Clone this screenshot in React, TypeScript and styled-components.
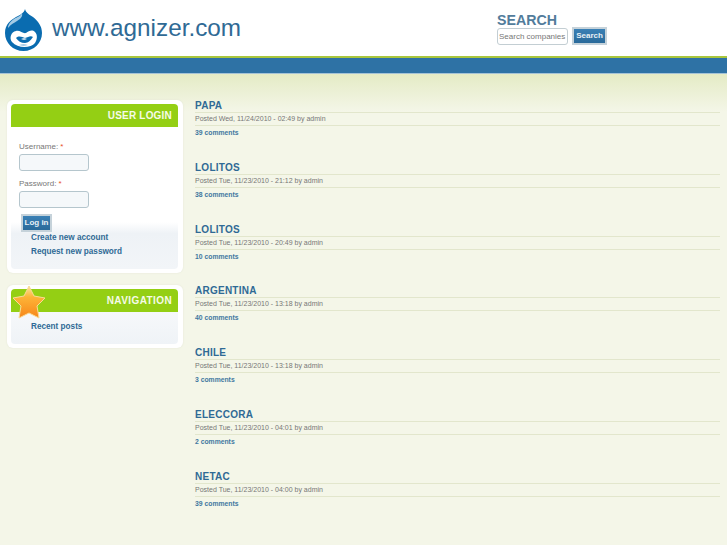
import styled, { createGlobalStyle } from "styled-components";

const posts = [
  { title: "PAPA", date: "Wed, 11/24/2010 - 02:49", comments: 39 },
  { title: "LOLITOS", date: "Tue, 11/23/2010 - 21:12", comments: 38 },
  { title: "LOLITOS", date: "Tue, 11/23/2010 - 20:49", comments: 10 },
  { title: "ARGENTINA", date: "Tue, 11/23/2010 - 13:18", comments: 40 },
  { title: "CHILE", date: "Tue, 11/23/2010 - 13:18", comments: 3 },
  { title: "ELECCORA", date: "Tue, 11/23/2010 - 04:01", comments: 2 },
  { title: "NETAC", date: "Tue, 11/23/2010 - 04:00", comments: 39 },
];

const GlobalStyle = createGlobalStyle`
  html, body {
    margin: 0;
    height: 545px;
    overflow: hidden;
    background: #f4f6e8;
    font-family: "Liberation Sans", Arial, sans-serif;
  }
`;

const Header = styled.header`
  height: 56px;
  background: #fff;
  display: flex;
  box-sizing: border-box;
  padding-left: 5px;
`;

const Logo = styled.svg`
  width: 37px;
  height: 42px;
  margin-top: 9px;
  flex: none;
`;

const SiteName = styled.h1`
  margin: 13px 0 0 10px;
  width: 445px;
  flex: none;
  font-size: 24.3px;
  font-weight: 400;
  line-height: 30px;
  color: #2f6a95;
`;

const SearchBlock = styled.div`
  padding-top: 13px;
`;

const SearchTitle = styled.div`
  font-size: 14.2px;
  font-weight: 700;
  line-height: 14px;
  color: #527c9b;
`;

const SearchRow = styled.div`
  display: flex;
  align-items: center;
  gap: 4px;
`;

const SearchInput = styled.div`
  width: 71px;
  height: 17px;
  box-sizing: border-box;
  border: 1px solid #c3ced3;
  border-radius: 3px;
  padding-left: 1px;
  font-size: 8px;
  line-height: 15px;
  color: #777;
  white-space: nowrap;
`;

const Button = styled.div`
  height: 18px;
  box-sizing: border-box;
  border: 2px solid #c5d2da;
  background: linear-gradient(#3a80b5, #2a6a9a);
  color: #e8f0f5;
  font-size: 8px;
  font-weight: 700;
  line-height: 14px;
  text-align: center;
`;

const SearchButton = styled(Button)`
  width: 35px;
`;

const LoginButton = styled(Button)`
  width: 31px;
  margin: -1px 0 0 2px;
`;

const Bar = styled.div`
  height: 15px;
  background: #2e72a5;
  border-top: 2px solid #a9c63c;
  border-bottom: 1px solid #a5c3d6;
`;

const Main = styled.main`
  display: flex;
  gap: 12px;
  padding: 26px 7px 0 7px;
  background: linear-gradient(#e4ebc5 0, #f4f6e8 38px) no-repeat;
`;

const Sidebar = styled.aside`
  width: 176px;
  flex: none;
  display: flex;
  flex-direction: column;
  gap: 12px;
`;

const Block = styled.section`
  position: relative;
  background: #fff;
  border-radius: 6px;
  padding: 4px 5px 4px 4px;
  box-shadow: 0 0 2px #e2e5d5;
`;

const BlockTitle = styled.h2<{ $spacing: number }>`
  margin: 0;
  height: 23px;
  background: #94cf14;
  border-radius: 4px 4px 0 0;
  color: #f6fbe8;
  font-size: 10px;
  font-weight: 700;
  line-height: 23px;
  letter-spacing: ${(p) => p.$spacing}px;
  text-align: right;
  padding-right: 6px;
`;

const BlockBody = styled.div<{ $height: number }>`
  display: flow-root;
  height: ${(p) => p.$height}px;
  box-sizing: border-box;
  border-radius: 0 0 4px 4px;
  background: linear-gradient(#f6f8fa 0, #eff3f7 100%);
`;

const LoginBody = styled(BlockBody)`
  padding: 14px 0 0 8px;
  background: linear-gradient(#fff 0, #fff 67%, #eef2f6 75%, #f2f5f8 100%);
`;

const FieldLabel = styled.div`
  font-size: 8px;
  line-height: 12px;
  color: #777;

  span {
    color: #e8502a;
  }
`;

const LoginField = styled.div`
  width: 70px;
  height: 17px;
  box-sizing: border-box;
  margin: 1px 0 7px;
  border: 1px solid #b5c6cd;
  border-radius: 3px;
  background: #f5f8fa;
`;

const BlockLinks = styled.ul<{ $top: number; $indent: number }>`
  list-style: none;
  margin: ${(p) => p.$top}px 0 0;
  padding: 0 0 0 ${(p) => p.$indent}px;
`;

const BlockLink = styled.li`
  font-size: 8.2px;
  font-weight: 700;
  line-height: 14px;
  color: #2f6a95;
`;

const Star = styled.svg`
  position: absolute;
  left: 5px;
  top: 0;
  width: 34px;
  height: 34px;
`;

const Posts = styled.div`
  flex: 1;
`;

const Post = styled.article`
  height: 61.8px;
`;

const PostTitle = styled.h3`
  margin: 0;
  height: 12px;
  font-size: 10px;
  font-weight: 700;
  line-height: 11px;
  letter-spacing: 0.25px;
  color: #2f6a95;
  border-bottom: 1px solid #e2e6cc;
`;

const PostMeta = styled.div`
  height: 12px;
  font-size: 7px;
  line-height: 12px;
  color: #777;
  border-bottom: 1px solid #e2e6cc;
`;

const PostLinks = styled.div`
  font-size: 6.8px;
  font-weight: 700;
  line-height: 13px;
  color: #3f78a0;
`;

export default function App() {
  return (
    <>
      <GlobalStyle />
      <Header>
        <Logo viewBox="0 0 37 42">
          <path
            d="M20 0c1 4 5 6 8 8 5 4 9 9 9 16 0 10-8 18-18.500 18S0 34 0 24C0 15 6 11 11 8c4-2 8-4 9-8z"
            fill="#0a6cb0"
          />
          <path d="M17 4c-1 3-5 4-8 6-3 2-6 5-6 9 3-4 6-5 9-7 3-2 6-4 5-8z" fill="#a4cbe5" />
          <path
            d="M7 33c-3-4-1-10 4-11 4-1 7 3 10 2 3-2 6-4 9-1 3 3 2 8 0 11-4 5-17 6-23-1z"
            fill="#fff"
          />
          <path d="M11 29c3-3 6-1 9 0 3-1 6-3 8-1-2 3-5 6-8 6-4 0-7-2-9-5z" fill="#0a6cb0" />
          <path d="M16 30c2-1 4-1 6 0-2 1-4 1-6 0z" fill="#fff" />
          <path d="M14 36c3-1 6-1 9 0-3 1-6 1-9 0z" fill="#8bbbdc" />
        </Logo>
        <SiteName>www.agnizer.com</SiteName>
        <SearchBlock>
          <SearchTitle>SEARCH</SearchTitle>
          <SearchRow>
            <SearchInput>Search companies</SearchInput>
            <SearchButton>Search</SearchButton>
          </SearchRow>
        </SearchBlock>
      </Header>
      <Bar />
      <Main>
        <Sidebar>
          <Block>
            <BlockTitle $spacing={0.2}>USER LOGIN</BlockTitle>
            <LoginBody $height={142}>
              <FieldLabel>
                Username: <span>*</span>
              </FieldLabel>
              <LoginField />
              <FieldLabel>
                Password: <span>*</span>
              </FieldLabel>
              <LoginField />
              <LoginButton>Log in</LoginButton>
              <BlockLinks $top={-1} $indent={12}>
                <BlockLink>Create new account</BlockLink>
                <BlockLink>Request new password</BlockLink>
              </BlockLinks>
            </LoginBody>
          </Block>
          <Block>
            <BlockTitle $spacing={0.4}>NAVIGATION</BlockTitle>
            <BlockBody $height={32}>
              <BlockLinks $top={8} $indent={20}>
                <BlockLink>Recent posts</BlockLink>
              </BlockLinks>
            </BlockBody>
            <Star viewBox="0 0 34 34">
              <defs>
                <linearGradient id="starFill" x1="0" y1="0" x2="0" y2="1">
                  <stop offset="0" stopColor="#fde4a0" />
                  <stop offset="0.35" stopColor="#fdb437" />
                  <stop offset="1" stopColor="#f7861a" />
                </linearGradient>
              </defs>
              <path
                d="M17 1l5 10 11 2-8 8 2 12-10-5-10 5 2-12-8-8 11-2z"
                fill="url(#starFill)"
                stroke="#f9dc96"
                strokeWidth="1"
                strokeLinejoin="round"
              />
            </Star>
          </Block>
        </Sidebar>
        <Posts>
          {posts.map((post, i) => (
            <Post key={i}>
              <PostTitle>{post.title}</PostTitle>
              <PostMeta>Posted {post.date} by admin</PostMeta>
              <PostLinks>{post.comments} comments</PostLinks>
            </Post>
          ))}
        </Posts>
      </Main>
    </>
  );
}
